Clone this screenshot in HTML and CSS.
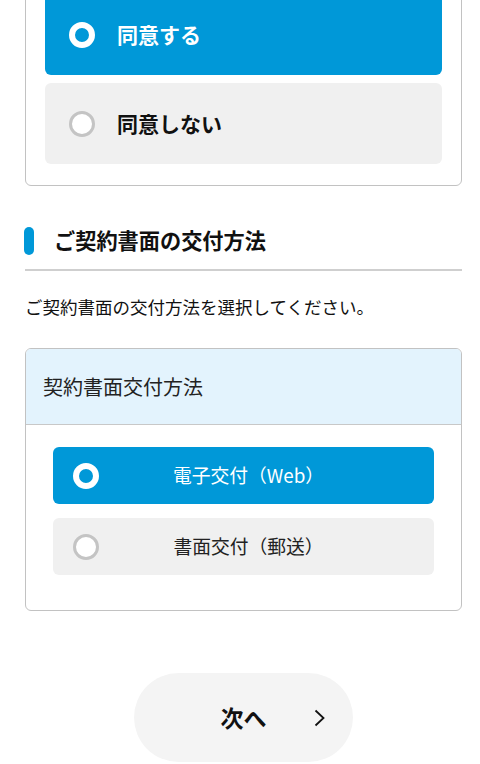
FILE: index.html
```html
<!DOCTYPE html>
<html lang="ja">
<head>
<meta charset="utf-8">
<link rel="stylesheet" href="styles.css">
</head>
<body>
<div class="page">
  <div class="card agree-card">
    <div class="agree-opt selected"><span class="radio on"></span><span class="agree-label">同意する</span></div>
    <div class="agree-opt"><span class="radio"></span><span class="agree-label">同意しない</span></div>
  </div>

  <div class="section-head">
    <span class="bar"></span>
    <h2 class="section-title">ご契約書面の交付方法</h2>
  </div>
  <p class="desc">ご契約書面の交付方法を選択してください。</p>

  <div class="card method-card">
    <div class="method-head">契約書面交付方法</div>
    <div class="method-body">
      <div class="method-opt selected"><span class="radio on"></span><span class="method-label">電子交付（Web）</span></div>
      <div class="method-opt"><span class="radio"></span><span class="method-label">書面交付（郵送）</span></div>
    </div>
  </div>

  <button class="next-btn"><span class="next-label">次へ</span>
    <svg class="chev" width="12" height="18" viewBox="0 0 12 18"><path d="M1.5 1.5 L9.5 9 L1.5 16.5" fill="none" stroke="#111" stroke-width="1.8"/></svg>
  </button>
</div>
</body>
</html>
```

FILE: styles.css
```css
html, body { margin: 0; padding: 0; background: #fff; }
body {
  font-family: "Noto Sans CJK JP", "Noto Sans", sans-serif;
  color: #111;
  overflow: hidden;
}
.page {
  padding: 0 18px 0 25px;
}
.card {
  border: 1px solid #c2c2c2;
  border-radius: 6px;
  background: #fff;
}
.agree-card {
  margin-top: -28px;
  padding: 21px 19px;
  display: flex;
  flex-direction: column;
  gap: 8px;
}
.agree-opt {
  height: 81px;
  border-radius: 6px;
  background: #f0f0f0;
  display: flex;
  align-items: center;
  padding-left: 24px;
  gap: 22px;
}
.agree-opt.selected { background: #0098d8; }
.agree-label {
  font-size: 21px;
  font-weight: 700;
  line-height: 1;
  color: #111;
}
.agree-opt.selected .agree-label { color: #fff; }

.radio {
  width: 26px;
  height: 26px;
  box-sizing: border-box;
  border-radius: 50%;
  border: 3px solid #c4c4c4;
  background: #fff;
  flex: none;
}
.radio.on {
  border: 6px solid #fff;
  background: #0098d8;
}

.section-head {
  margin-top: 41px;
  display: flex;
  align-items: center;
  gap: 20px;
  padding-bottom: 14px;
  border-bottom: 2px solid #cfcfcf;
}
.bar {
  width: 10px;
  height: 28px;
  border-radius: 5px;
  background: #0098d8;
  margin-left: -1px;
  flex: none;
}
.section-title {
  margin: 0;
  font-size: 21.2px;
  font-weight: 700;
  line-height: 28px;
  margin-top: -2px;
}
.desc {
  margin: 23px 0 0;
  font-size: 17.5px;
  line-height: 25px;
  color: #111;
}
.method-card {
  margin-top: 29px;
  overflow: hidden;
}
.method-head {
  height: 75px;
  background: #e3f3fd;
  border-bottom: 1px solid #c8c8c8;
  display: flex;
  align-items: center;
  padding-left: 17px;
  font-size: 20px;
  color: #222;
}
.method-body {
  padding: 22px 27px 35px 27px;
  display: flex;
  flex-direction: column;
  gap: 14px;
}
.method-opt {
  height: 57px;
  border-radius: 6px;
  background: #f0f0f0;
  display: grid;
  grid-template-columns: 1fr auto 1fr;
  align-items: center;
  padding-left: 20px;
  padding-right: 10px;
}
.method-opt .radio { justify-self: start; }
.method-opt.selected { background: #0098d8; }
.method-label {
  font-size: 18.8px;
  line-height: 1;
  color: #222;
}
.method-opt.selected .method-label { color: #fff; }

.next-btn {
  display: flex;
  position: relative;
  align-items: center;
  justify-content: center;
  width: 219px;
  height: 89px;
  margin: 62px auto 0;
  border: none;
  border-radius: 45px;
  background: #f4f4f4;
  font-family: inherit;
  padding: 0;
}
.next-label {
  font-size: 23px;
  font-weight: 700;
  color: #111;
  line-height: 1;
}
.chev {
  position: absolute;
  right: 27px;
  top: 36px;
}
```
